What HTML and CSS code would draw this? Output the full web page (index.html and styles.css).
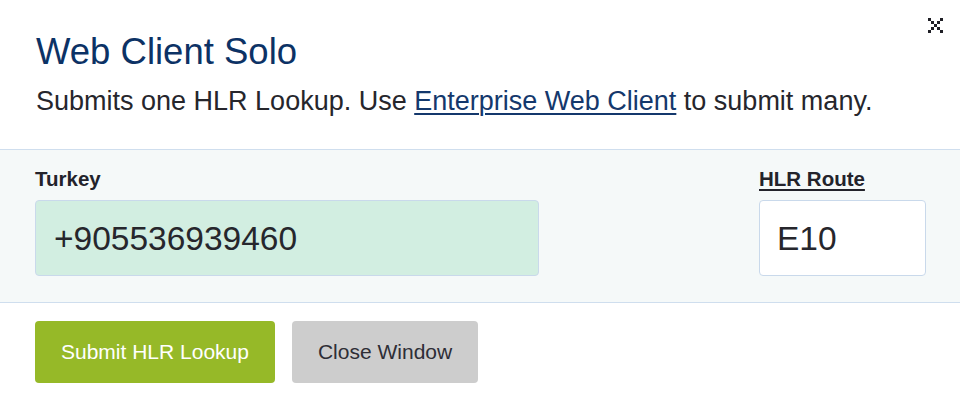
FILE: index.html
```html
<!DOCTYPE html>
<html lang="en">
<head>
<meta charset="utf-8">
<title>Web Client Solo</title>
<link rel="stylesheet" href="styles.css">
</head>
<body>
<div class="modal">
  <button class="close-x" aria-label="Close">
    <svg width="15" height="15" viewBox="0 0 15 15" aria-hidden="true">
      <rect x="0" y="0" width="3" height="3"/>
      <rect x="12" y="0" width="3" height="3"/>
      <rect x="3" y="3" width="3" height="3"/>
      <rect x="9" y="3" width="3" height="3"/>
      <rect x="6" y="6" width="3" height="3"/>
      <rect x="3" y="9" width="3" height="3"/>
      <rect x="9" y="9" width="3" height="3"/>
      <rect x="0" y="12" width="3" height="3"/>
      <rect x="12" y="12" width="3" height="3"/>
    </svg>
  </button>
  <header class="head">
    <h1 class="title">Web Client Solo</h1>
    <p class="sub">Submits one HLR Lookup. Use <a href="#" class="link">Enterprise Web Client</a> to submit many.</p>
  </header>
  <section class="fields">
    <div class="field field-main">
      <label class="label">Turkey</label>
      <div class="box box-number">+905536939460</div>
    </div>
    <div class="field field-route">
      <label class="label label-u">HLR Route</label>
      <div class="box box-route">E10</div>
    </div>
  </section>
  <footer class="actions">
    <button class="btn btn-submit">Submit HLR Lookup</button>
    <button class="btn btn-close">Close Window</button>
  </footer>
</div>
</body>
</html>
```

FILE: styles.css
```css
* { box-sizing: border-box; }
html, body {
  margin: 0;
  padding: 0;
  background: #ffffff;
}
body {
  font-family: "Liberation Sans", Arial, sans-serif;
  color: #26262c;
}
.modal {
  position: relative;
  width: 960px;
  height: 400px;
  background: #ffffff;
  border-radius: 6px;
  overflow: hidden;
}
.close-x {
  position: absolute;
  top: 18px;
  left: 928px;
  padding: 0;
  margin: 0;
  border: 0;
  background: transparent;
  width: 15px;
  height: 15px;
  display: block;
}
.close-x svg { display: block; fill: #1f1f26; }

.head {
  padding: 30px 36px 32px;
}
.title {
  margin: 0 0 12px;
  font-size: 36.5px;
  line-height: 43px;
  font-weight: 400;
  color: #0c3265;
}
.sub {
  margin: 0;
  font-size: 27px;
  line-height: 32px;
  color: #26262c;
}
.link {
  color: #14386c;
  text-decoration: underline;
  text-decoration-thickness: 1.5px;
  text-underline-offset: 3px;
}

.fields {
  display: flex;
  justify-content: space-between;
  padding: 17px 34px 26px 35px;
  background: #f5f9f9;
  border-top: 1px solid #cfdeee;
  border-bottom: 1px solid #cfdeee;
}
.field { display: flex; flex-direction: column; }
.field-main { width: 504px; }
.field-route { width: 167px; }
.label {
  font-size: 20.5px;
  line-height: 24px;
  font-weight: 700;
  color: #23232b;
  margin-bottom: 9px;
}
.label-u {
  text-decoration: underline;
  text-decoration-thickness: 2px;
  text-underline-offset: 3px;
}
.box {
  height: 76px;
  display: flex;
  align-items: center;
  padding: 1px 0 0 18px;
  border: 1px solid #c9d9eb;
  border-radius: 4px;
  font-size: 33.5px;
  color: #26262c;
}
.box-number { background: #d2eee1; }
.box-route { background: #ffffff; padding-left: 17px; }

.actions {
  display: flex;
  gap: 17px;
  padding: 18px 35px;
}
.btn {
  height: 62px;
  padding: 0 26px;
  border: 0;
  border-radius: 4px;
  font-family: "Liberation Sans", Arial, sans-serif;
  font-size: 21px;
  line-height: 24px;
}
.btn-submit {
  background: #96b928;
  color: #ffffff;
}
.btn-close {
  background: #cdcdcd;
  color: #2e2e36;
}
```
